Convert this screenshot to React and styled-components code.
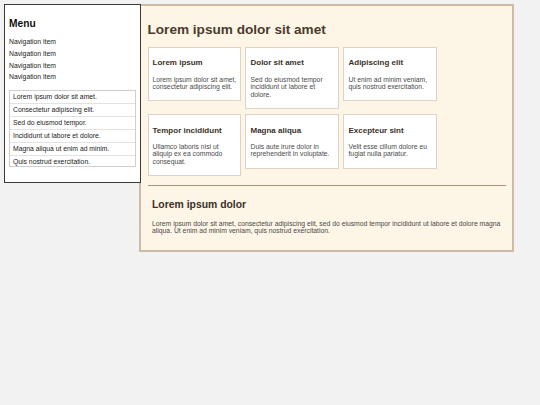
import React from "react";
import styled, { createGlobalStyle } from "styled-components";

const Global = createGlobalStyle`
  html, body { margin: 0; padding: 0; background: #f2f2f2; }
  body { font-family: "Liberation Sans", Arial, sans-serif; font-size: 6.8px; color: #333; }
  * { box-sizing: border-box; }
`;

const Page = styled.div`
  display: flex;
  align-items: flex-start;
  padding: 4px;
`;

const Sidebar = styled.aside`
  position: relative;
  z-index: 1;
  width: 137px;
  flex: none;
  background: #fff;
  border: 1px solid #3a3a3a;
  padding: 4px 4px 5px 4px;
`;

const MenuTitle = styled.h2`
  margin: 8.5px 0 7px;
  font-size: 10.2px;
  line-height: 12px;
  font-weight: bold;
  color: #111;
`;

const NavList = styled.ul`
  list-style: none;
  margin: 0 0 7px;
  padding: 0;
`;

const NavItem = styled.li`
  padding: 1.95px 0;
  line-height: 7.8px;
  font-size: 6.8px;
  color: #222;
`;

const ListBox = styled.ul`
  list-style: none;
  margin: 0 0 10px;
  padding: 0;
  border: 1px solid #cfcfcf;
  height: 77px;
  overflow: hidden;
`;

const ListRow = styled.li`
  padding: 2.1px 3px;
  line-height: 7.8px;
  border-bottom: 1px solid #e2e2e2;
  color: #222;
`;

const Main = styled.main`
  width: 375px;
  flex: none;
  margin-left: -2px;
  background: #fdf5e6;
  border: 2px solid #cbbba8;
  padding: 6.5px 6.5px 4.5px;
`;

const Title = styled.h1`
  margin: 9px 0;
  font-size: 13.6px;
  line-height: 16px;
  font-weight: bold;
  color: #4a3b2e;
`;

const CardGrid = styled.div`
  display: flex;
  flex-wrap: wrap;
  align-items: flex-start;
  gap: 5px 4.3px;
`;

const Card = styled.div`
  width: 93.7px;
  background: #fff;
  border: 1px solid #ddd2c6;
  padding: 10.8px 3.5px 9.75px 4px;
`;

const CardTitle = styled.h3`
  margin: 0 0 8px;
  font-size: 8px;
  line-height: 9.2px;
  font-weight: bold;
  color: #3b3128;
`;

const CardText = styled.p`
  margin: 0;
  font-size: 6.8px;
  line-height: 7.5px;
  color: #4a4a4a;
`;

const Section = styled.section`
  margin-top: 9px;
  border-top: 1px solid #a8937f;
  padding: 5px 4.5px;
`;

const SectionTitle = styled.h2`
  margin: 7.5px 0 9px;
  font-size: 10.4px;
  line-height: 12px;
  font-weight: bold;
  color: #3b3128;
`;

const SectionText = styled.p`
  margin: 0 0 7px;
  font-size: 6.8px;
  line-height: 7px;
  color: #4a4a4a;
`;

const cards = [
  ["Lorem ipsum", "Lorem ipsum dolor sit amet, consectetur adipiscing elit."],
  ["Dolor sit amet", "Sed do eiusmod tempor incididunt ut labore et dolore."],
  ["Adipiscing elit", "Ut enim ad minim veniam, quis nostrud exercitation."],
  ["Tempor incididunt", "Ullamco laboris nisi ut aliquip ex ea commodo consequat."],
  ["Magna aliqua", "Duis aute irure dolor in reprehenderit in voluptate."],
  ["Excepteur sint", "Velit esse cillum dolore eu fugiat nulla pariatur."],
];

const rows = [
  "Lorem ipsum dolor sit amet.",
  "Consectetur adipiscing elit.",
  "Sed do eiusmod tempor.",
  "Incididunt ut labore et dolore.",
  "Magna aliqua ut enim ad minim.",
  "Quis nostrud exercitation.",
];

export default function App() {
  return (
    <>
      <Global />
      <Page>
        <Sidebar>
          <MenuTitle>Menu</MenuTitle>
          <NavList>
            {[0, 1, 2, 3].map((i) => (
              <NavItem key={i}>Navigation item</NavItem>
            ))}
          </NavList>
          <ListBox>
            {rows.map((r) => (
              <ListRow key={r}>{r}</ListRow>
            ))}
          </ListBox>
        </Sidebar>
        <Main>
          <Title>Lorem ipsum dolor sit amet</Title>
          <CardGrid>
            {cards.map(([t, d]) => (
              <Card key={t}>
                <CardTitle>{t}</CardTitle>
                <CardText>{d}</CardText>
              </Card>
            ))}
          </CardGrid>
          <Section>
            <SectionTitle>Lorem ipsum dolor</SectionTitle>
            <SectionText>
              Lorem ipsum dolor sit amet, consectetur adipiscing elit, sed do eiusmod tempor incididunt ut labore et dolore magna aliqua. Ut enim ad minim veniam, quis nostrud exercitation.
            </SectionText>
          </Section>
        </Main>
      </Page>
    </>
  );
}
